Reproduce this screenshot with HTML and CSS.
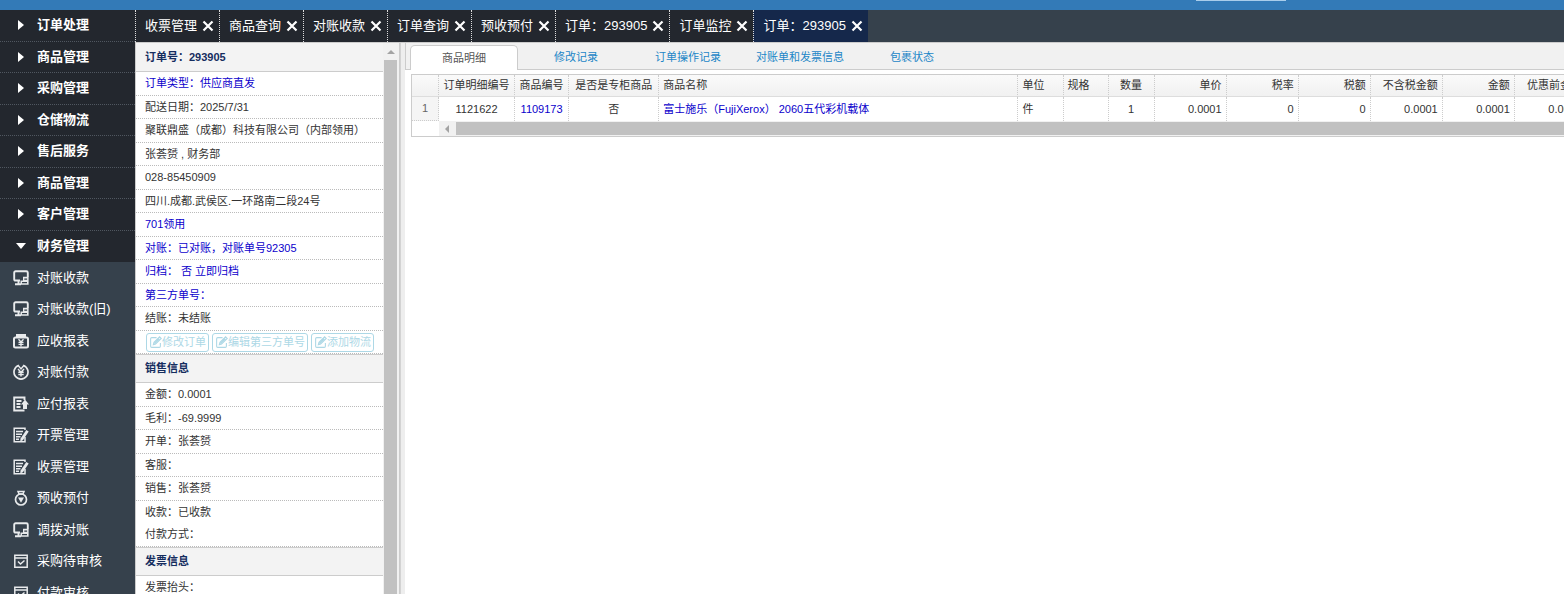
FILE: index.html
```
<!DOCTYPE html>
<html lang="zh-CN">
<head>
<meta charset="utf-8">
<title>订单：293905</title>
<link rel="stylesheet" href="styles.css">
</head>
<body>
<svg class="defs" aria-hidden="true">
  <symbol id="i-screen" viewBox="0 0 16 16"><path d="M7 10.500H2.500Q1.200 10.500 1.200 9.300V2.700Q1.200 1.200 2.700 1.200H13.300Q14.800 1.200 14.800 2.700V7M2 14.200H8M5.500 11V14" fill="none" stroke="currentColor" stroke-width="1.900"/><path d="M10 6.800h5.600v8H7.500v-4.300H10zM11.300 8.500v1.300h2.800V8.500zM9 12v1.200h5V12z" fill="currentColor" fill-rule="evenodd"/></symbol>
  <symbol id="i-box" viewBox="0 0 16 16"><path d="M3 1h10v3H3z" fill="currentColor"/><rect x="1" y="4.500" width="14" height="10" rx="1.500" fill="none" stroke="currentColor" stroke-width="2"/><path d="M5.500 6.200L8 9l2.500-2.800M8 9v4.500M5.500 9.300h5M5.500 11.300h5" fill="none" stroke="currentColor" stroke-width="1.300"/></symbol>
  <symbol id="i-yen" viewBox="0 0 16 16"><path d="M5.500 1.500a7 7 0 1 0 5 0" fill="none" stroke="currentColor" stroke-width="1.700"/><path d="M4.800 1L8 5l3.200-4M5 5l3 3.200L11 5M8 8v4.500M5.300 8.300h5.400M5.300 10.500h5.400" fill="none" stroke="currentColor" stroke-width="1.400"/></symbol>
  <symbol id="i-pay" viewBox="0 0 16 16"><path d="M11.500 14.500H1.200V1.500H11.500V4M3.500 5h5M3.500 8h4M3.500 11h4" fill="none" stroke="currentColor" stroke-width="1.900"/><path d="M12 3.500l4 5h-2V13h-4V8.500H8z" fill="currentColor"/></symbol>
  <symbol id="i-note" viewBox="0 0 16 16"><path d="M12 10v4.700H1.200V1.300H12V3M3 4.500H10M3 7.200h6M3 9.800h4.500M3 12.200H6" fill="none" stroke="currentColor" stroke-width="1.500"/><path d="M13.300 3l2.400 1.400L9.900 13.200l-2.700 1.200.4-2.900z" fill="currentColor"/></symbol>
  <symbol id="i-bag" viewBox="0 0 16 16"><circle cx="8" cy="9.500" r="5.500" fill="none" stroke="currentColor" stroke-width="1.700"/><path d="M5 1.500h6L10 4H6z" fill="none" stroke="currentColor" stroke-width="1.500"/><path d="M5 7.500h6L8 12.800z" fill="currentColor"/></symbol>
  <symbol id="i-check" viewBox="0 0 16 16"><path d="M1.800 2.200h12.400v12H1.800zM1.800 5h12.400M5 8.500l2.500 2.500L11.500 7.500" fill="none" stroke="currentColor" stroke-width="1.500"/></symbol>
  <symbol id="i-close" viewBox="0 0 12 12"><path d="M1.500 1.500l9 9M10.500 1.500l-9 9" fill="none" stroke="currentColor" stroke-width="2.200"/></symbol>
  <symbol id="i-edit" viewBox="0 0 12 12"><path d="M7 1.500H2.500q-1 0-1 1v7q0 1 1 1h7q1 0 1-1V6.500M4 8l.6-2.200L9.800.8l1.500 1.500L6.100 7.500zM5 7l4.500-4.500" fill="none" stroke="currentColor"/></symbol>
</svg>
<header class="topbar"><span class="topbar-handle"></span></header>
<div class="app">
  <nav class="menu">
    <a class="group" href="#"><i class="arrow"></i>订单处理</a>
    <a class="group" href="#"><i class="arrow"></i>商品管理</a>
    <a class="group" href="#"><i class="arrow"></i>采购管理</a>
    <a class="group" href="#"><i class="arrow"></i>仓储物流</a>
    <a class="group" href="#"><i class="arrow"></i>售后服务</a>
    <a class="group" href="#"><i class="arrow"></i>商品管理</a>
    <a class="group" href="#"><i class="arrow"></i>客户管理</a>
    <a class="group" href="#"><i class="arrow open"></i>财务管理</a>
    <a class="item" href="#"><svg><use href="#i-screen"/></svg>对账收款</a>
    <a class="item" href="#"><svg><use href="#i-screen"/></svg>对账收款(旧)</a>
    <a class="item" href="#"><svg><use href="#i-box"/></svg>应收报表</a>
    <a class="item" href="#"><svg><use href="#i-yen"/></svg>对账付款</a>
    <a class="item" href="#"><svg><use href="#i-pay"/></svg>应付报表</a>
    <a class="item" href="#"><svg><use href="#i-note"/></svg>开票管理</a>
    <a class="item" href="#"><svg><use href="#i-note"/></svg>收票管理</a>
    <a class="item" href="#"><svg><use href="#i-bag"/></svg>预收预付</a>
    <a class="item" href="#"><svg><use href="#i-screen"/></svg>调拨对账</a>
    <a class="item" href="#"><svg><use href="#i-check"/></svg>采购待审核</a>
    <a class="item" href="#"><svg><use href="#i-check"/></svg>付款审核</a>
  </nav>
  <div class="work">
    <div class="tabs">
      <div class="tab"><a href="#">收票管理</a><button aria-label="关闭"><svg><use href="#i-close"/></svg></button></div>
      <div class="tab"><a href="#">商品查询</a><button aria-label="关闭"><svg><use href="#i-close"/></svg></button></div>
      <div class="tab"><a href="#">对账收款</a><button aria-label="关闭"><svg><use href="#i-close"/></svg></button></div>
      <div class="tab"><a href="#">订单查询</a><button aria-label="关闭"><svg><use href="#i-close"/></svg></button></div>
      <div class="tab"><a href="#">预收预付</a><button aria-label="关闭"><svg><use href="#i-close"/></svg></button></div>
      <div class="tab"><a href="#">订单：293905</a><button aria-label="关闭"><svg><use href="#i-close"/></svg></button></div>
      <div class="tab"><a href="#">订单监控</a><button aria-label="关闭"><svg><use href="#i-close"/></svg></button></div>
      <div class="tab current"><a href="#">订单：293905</a><button aria-label="关闭"><svg><use href="#i-close"/></svg></button></div>
    </div>
    <div class="panes">
      <aside class="order">
        <div class="order-body">
          <h2>订单号：293905</h2>
          <ul>
            <li><a href="#">订单类型：供应商直发</a></li>
            <li>配送日期：2025/7/31</li>
            <li>聚联鼎盛（成都）科技有限公司（内部领用）</li>
            <li>张荟赟 , 财务部</li>
            <li>028-85450909</li>
            <li>四川.成都.武侯区.一环路南二段24号</li>
            <li><a href="#">701领用</a></li>
            <li><a href="#">对账：已对账，对账单号92305</a></li>
            <li><a href="#">归档： 否 立即归档</a></li>
            <li><a href="#">第三方单号：</a></li>
            <li>结账：未结账</li>
            <li class="actions">
              <button><svg><use href="#i-edit"/></svg>修改订单</button>
              <button><svg><use href="#i-edit"/></svg>编辑第三方单号</button>
              <button><svg><use href="#i-edit"/></svg>添加物流</button>
            </li>
          </ul>
          <h2>销售信息</h2>
          <ul>
            <li>金额：0.0001</li>
            <li>毛利：-69.9999</li>
            <li>开单：张荟赟</li>
            <li>客服：</li>
            <li>销售：张荟赟</li>
            <li class="double">收款：已收款<br>付款方式：</li>
          </ul>
          <h2>发票信息</h2>
          <ul>
            <li>发票抬头：</li>
          </ul>
        </div>
        <div class="vscroll"><i class="up"></i><span class="thumb"></span></div>
      </aside>
      <main class="detail">
        <div class="subtabs">
          <a class="active" href="#">商品明细</a>
          <a href="#">修改记录</a>
          <a href="#">订单操作记录</a>
          <a href="#">对账单和发票信息</a>
          <a href="#">包裹状态</a>
        </div>
        <div class="grid">
          <table>
            <colgroup><col class="w-num"><col class="w-line"><col class="w-sku"><col class="w-flag"><col class="w-name"><col class="w-s"><col class="w-s"><col class="w-qty"><col class="w-m"><col class="w-m"><col class="w-m"><col class="w-m"><col class="w-m"><col class="w-m"></colgroup>
            <thead>
              <tr><th></th><th class="c">订单明细编号</th><th class="c">商品编号</th><th class="c">是否是专柜商品</th><th>商品名称</th><th>单位</th><th>规格</th><th class="c">数量</th><th class="r">单价</th><th class="r">税率</th><th class="r">税额</th><th class="r">不含税金额</th><th class="r">金额</th><th class="r">优惠前金额</th></tr>
            </thead>
            <tbody>
              <tr><td class="num">1</td><td class="c">1121622</td><td class="c"><a href="#">1109173</a></td><td class="c">否</td><td><a href="#">富士施乐（FujiXerox） 2060五代彩机载体</a></td><td>件</td><td></td><td class="c">1</td><td class="r">0.0001</td><td class="r">0</td><td class="r">0</td><td class="r">0.0001</td><td class="r">0.0001</td><td class="r">0.0001</td></tr>
            </tbody>
          </table>
          <div class="hscroll"><i class="left"></i><span class="thumb"></span></div>
        </div>
      </main>
    </div>
  </div>
</div>
</body>
</html>
```
FILE: styles.css
```
* { box-sizing: border-box; }
body {
  margin: 0;
  height: 100vh;
  overflow: hidden;
  display: flex;
  flex-direction: column;
  font: 11px/22px "Liberation Sans", "Noto Sans CJK SC", sans-serif;
  color: #333;
  background: #fff;
}
a { color: inherit; text-decoration: none; }
button { font: inherit; color: inherit; background: none; border: 0; padding: 0; cursor: pointer; }
ul { list-style: none; margin: 0; padding: 0; }
.defs { display: none; }

.topbar { flex: none; height: 10px; background: #337ab7; display: flex; justify-content: flex-end; padding-right: 278px; }
.topbar-handle { width: 90px; height: 1px; background: #a9cdeb; }
.app { flex: 1; min-height: 0; display: flex; }

/* left menu */
.menu { flex: none; width: 135px; background: #36414c; color: #fff; overflow: hidden; font-size: 13px; }
.menu a { display: flex; align-items: center; height: 32px; padding: 0 0 1px 13px; white-space: nowrap; }
.menu a:nth-child(even) { height: 31px; }
.group { background: #23272e; font-weight: bold; border-bottom: 1px dotted #505760; }
.menu .group:nth-child(8) { border-bottom-color: #23272e; }
.arrow { width: 8px; margin: 0 11px 0 5px; border: 5px solid transparent; border-left: 6px solid #fff; border-right: 0; }
.arrow.open { width: 10px; margin: 0 11px 0 3px; border: 5px solid transparent; border-top: 6px solid #fff; border-bottom: 0; }
.item svg { width: 16px; height: 16px; margin-right: 8px; color: #e8eaec; }

/* open pages */
.work { flex: 1; min-width: 0; display: flex; flex-direction: column; }
.tabs { flex: none; display: flex; height: 32px; background: #36414c; color: #fff; font-size: 13px; }
.tab { display: flex; align-items: center; gap: 5px; padding: 0 5px 1px 9px; background: #23272e; border-left: 1px dotted #ddd; white-space: nowrap; }
.tab button { display: flex; }
.tab svg { width: 12px; height: 12px; }
.tab.current { background: #15284b; }
.panes { flex: 1; min-height: 0; display: flex; border-top: 1px solid #ccc; }

/* order summary */
.order { flex: none; width: 266px; display: flex; overflow: hidden; border-left: 1px solid #ccc; border-right: 1px solid #d3d3d3; background: #f1f1f1; }
.order-body { flex: 1; min-width: 0; background: #fff; }
.order h2 { margin: 0; height: 29px; padding-left: 9px; font-size: 11px; line-height: 27px; color: #152d5f; background: #f3f3f3; border: solid #ccc; border-width: 1px 0; }
.order-body > h2:first-child { border-top-color: #f3f3f3; }
.order li { height: 24px; padding-left: 9px; border-bottom: 1px dotted #bbb; white-space: nowrap; }
.order li:nth-child(even) { height: 23px; }
.order li.double { height: 46px; }
.order a, .grid a { color: #0b00cc; }
.order .actions { display: flex; align-items: center; gap: 3px; padding-left: 10px; color: #add8e6; }
.actions button { display: flex; align-items: center; height: 19px; padding: 0 2px; border: 1px solid #add8e6; border-radius: 3px; }
.actions svg { width: 13px; height: 13px; }
.vscroll { flex: none; width: 17px; padding: 0 2px 0 1px; display: flex; flex-direction: column; align-items: center; border-right: 1px solid #ccc; background: #f1f1f1; }
.up { border: 4px solid transparent; border-bottom: 4px solid #a3a3a3; border-top: 0; margin: 7px 0 6px; }
.vscroll .thumb { flex: 1; width: 13px; background: #c1c1c1; }

/* order details */
.detail { flex: 1; min-width: 0; border-left: 4px solid #eee; overflow: hidden; }
.subtabs { display: flex; gap: 4px; height: 27px; padding: 2px 0 0 4px; background: #f1f1f1; border-bottom: 1px solid #ccc; border-left: 1px solid #ccc; color: #1c86c7; }
.subtabs a { min-width: 108px; height: 24px; line-height: 24px; text-align: center; white-space: nowrap; }
.subtabs .active { height: 25px; background: #fff; color: #555; border: 1px solid #ccc; border-bottom: 0; border-radius: 5px 5px 0 0; }
.grid { margin: 4px 0 0 6px; border: 1px solid #ccc; border-right: 0; overflow: hidden; }
table { width: 1175px; table-layout: fixed; border-collapse: separate; border-spacing: 0; }
th, td { height: 22px; padding: 0 4px; line-height: 21px; font-weight: normal; text-align: left; white-space: nowrap; overflow: hidden; border-right: 1px dotted #ccc; }
th { background: linear-gradient(#fafafa, #f1f1f1); border-bottom: 1px solid #ddd; }
td { height: 24px; }
td.num { text-align: center; color: #666; background: #f5f5f5; border-bottom: 1px dotted #ccc; }
.c { text-align: center; }
.r { text-align: right; }
.w-num { width: 27px; }
.w-line { width: 76px; }
.w-sku { width: 54px; }
.w-flag { width: 90px; }
.w-name { width: 359px; }
.w-s { width: 45px; }
.w-qty { width: 46px; }
.w-m { width: 72px; }
.hscroll { display: flex; align-items: center; height: 15px; margin-left: 27px; background: #f1f1f1; }
.left { border: 4px solid transparent; border-right: 4px solid #a3a3a3; border-left: 0; margin: 0 7px 0 6px; }
.hscroll .thumb { flex: 1; height: 13px; background: #c1c1c1; }
```
